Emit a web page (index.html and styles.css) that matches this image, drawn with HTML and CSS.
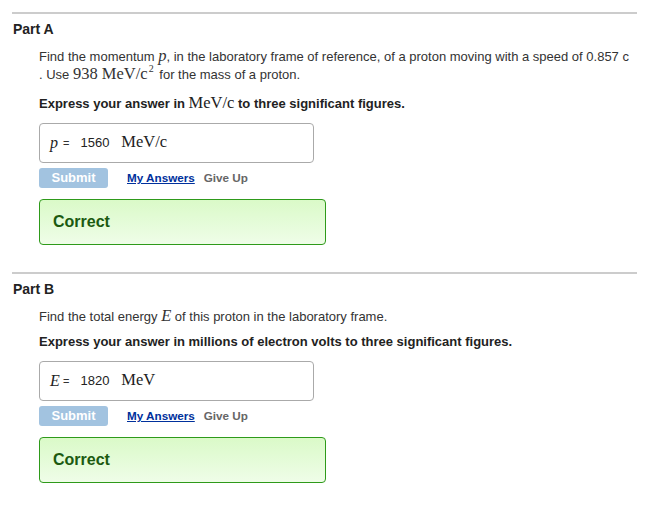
FILE: index.html
```html
<!DOCTYPE html>
<html>
<head>
<meta charset="utf-8">
<link rel="stylesheet" href="styles.css">
</head>
<body>
<div class="page">
  <section class="part">
    <h2 class="part-title">Part A</h2>
    <div class="part-body">
      <p class="prompt">Find the momentum <span class="m mi">p</span>, in the laboratory frame of reference, of a proton moving with a speed of 0.857 c<br>. Use <span class="m tall">938 MeV/c<sup>2</sup></span> for the mass of a proton.</p>
      <p class="instr">Express your answer in <span class="m">MeV/c</span> to three significant figures.</p>
      <div class="answer">
        <span class="m mi var">p</span><span class="eq">=</span><span class="val">1560</span><span class="m unit">MeV/c</span>
      </div>
      <div class="actions">
        <span class="submit">Submit</span>
        <a class="my-answers" href="#">My Answers</a>
        <span class="give-up">Give Up</span>
      </div>
      <div class="correct">Correct</div>
    </div>
  </section>
  <section class="part">
    <h2 class="part-title">Part B</h2>
    <div class="part-body">
      <p class="prompt">Find the total energy <span class="m mi">E</span> of this proton in the laboratory frame.</p>
      <p class="instr">Express your answer in millions of electron volts to three significant figures.</p>
      <div class="answer">
        <span class="m mi var">E</span><span class="eq">=</span><span class="val">1820</span><span class="m unit">MeV</span>
      </div>
      <div class="actions">
        <span class="submit">Submit</span>
        <a class="my-answers" href="#">My Answers</a>
        <span class="give-up">Give Up</span>
      </div>
      <div class="correct">Correct</div>
    </div>
  </section>
</div>
</body>
</html>
```

FILE: styles.css
```css
html, body {
  margin: 0;
  padding: 0;
  background: #fff;
}
body {
  font-family: "Liberation Sans", Arial, sans-serif;
  color: #222;
}
.page {
  padding: 12px 13px 0 12px;
}
.part {
  border-top: 2px solid #cccccc;
}
.part-title {
  margin: 0;
  padding: 6px 0 0 1px;
  font-size: 14px;
  font-weight: bold;
  line-height: 18px;
  color: #222;
}
.part-body {
  padding: 10px 0 0 27px;
}
.prompt {
  margin: 0;
  font-size: 13px;
  line-height: 18px;
  color: #333;
}
.m {
  font-family: "Liberation Serif", "Times New Roman", serif;
  font-size: 16.5px;
  line-height: 1;
}
.mi {
  font-style: italic;
}
.m.tall {
  display: inline-block;
  padding-bottom: 5px;
}
.m sup {
  font-size: 10px;
  line-height: 0;
  vertical-align: 0;
  position: relative;
  top: -7px;
  margin-left: 1px;
  margin-right: 2px;
}
.instr {
  margin: 7px 0 0;
  font-size: 13px;
  font-weight: bold;
  line-height: 18px;
  color: #222;
}
.instr .m {
  font-weight: normal;
}
.answer {
  margin-top: 10px;
  width: 263px;
  height: 38px;
  border: 1px solid #aaaaaa;
  border-radius: 4px;
  display: flex;
  align-items: center;
  padding-left: 10px;
}
.answer .var {
  font-size: 16px;
  width: 12px;
}
.answer .eq {
  font-size: 11px;
  margin-left: 1px;
  color: #333;
}
.answer .val {
  font-size: 13px;
  margin-left: 11px;
  color: #222;
}
.answer .unit {
  font-size: 16.5px;
  margin-left: 12px;
}
.actions {
  margin-top: 5px;
  display: flex;
  align-items: center;
  height: 20px;
}
.submit {
  width: 69px;
  height: 20px;
  border-radius: 3px;
  background: #a2c3e0;
  color: #fff;
  font-size: 13px;
  font-weight: bold;
  line-height: 20px;
  text-align: center;
}
.my-answers {
  margin-left: 19px;
  font-size: 11.7px;
  font-weight: bold;
  color: #00309c;
  text-decoration: underline;
}
.give-up {
  margin-left: 9px;
  font-size: 11.7px;
  font-weight: bold;
  color: #666;
}
.correct {
  margin-top: 11px;
  width: 272px;
  height: 44px;
  border: 1px solid #2e9a1a;
  border-radius: 4px;
  background: linear-gradient(#dafac8, #effde8);
  color: #1b5a10;
  font-size: 16px;
  font-weight: bold;
  line-height: 44px;
  padding-left: 13px;
  margin-bottom: 27px;
}
```
